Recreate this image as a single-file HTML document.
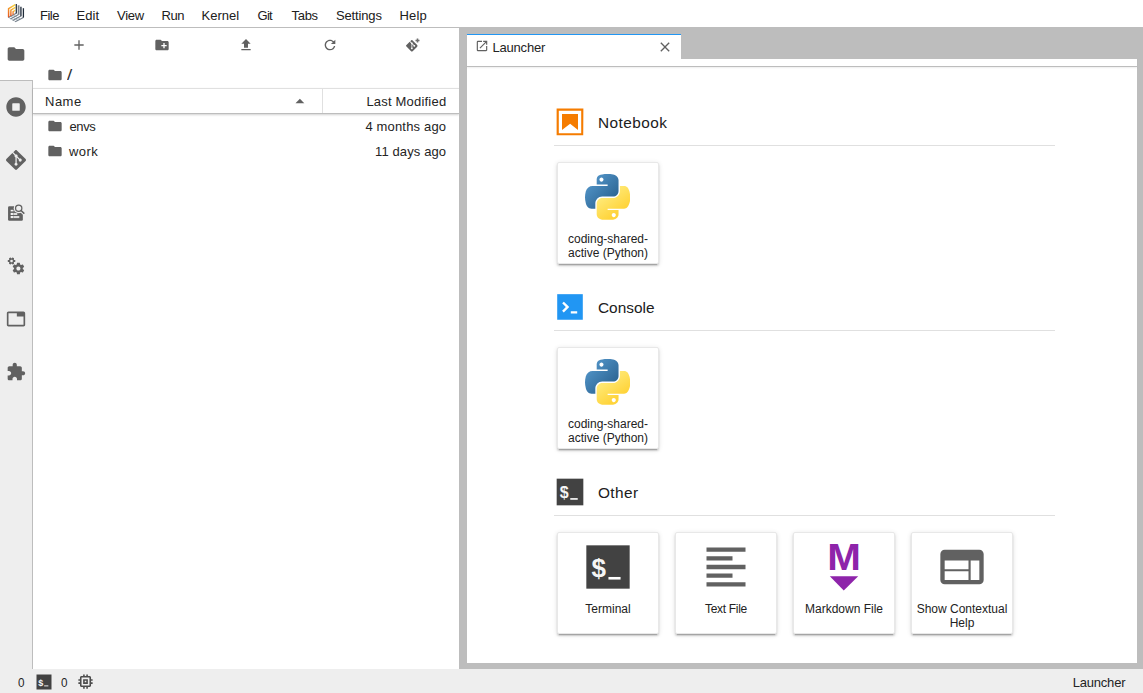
<!DOCTYPE html>
<html lang="en">
<head>
<meta charset="utf-8">
<title>JupyterLab</title>
<style>
html,body{margin:0;padding:0;}
body{width:1143px;height:693px;overflow:hidden;background:#fff;position:relative;
  font-family:"Liberation Sans",sans-serif;font-size:13px;color:#242424;}
.abs{position:absolute;}
.t{position:absolute;white-space:nowrap;line-height:1;}
svg{position:absolute;display:block;overflow:visible;}

/* top menu */
#menubar{left:0;top:0;width:1143px;height:27px;background:#fff;border-bottom:1px solid #bdbdbd;}
#menubar .t{top:9px;font-size:13px;color:#202020;}

/* left sidebar */
#sidebar{left:0;top:28px;width:32px;height:641px;background:#eee;border-right:1px solid #bdbdbd;}
#sbactive{left:0;top:28px;width:33px;height:52px;background:#fff;border-bottom:1px solid #bdbdbd;}

/* file browser */
#fb{left:33px;top:28px;width:426px;height:641px;background:#fff;}
#fbhead{left:33px;top:88px;width:426px;height:24px;border-top:1px solid #e0e0e0;border-bottom:1px solid #bdbdbd;box-shadow:0 1px 2px rgba(0,0,0,.18);background:#fff;}
#colsep{left:322px;top:89px;width:1px;height:24px;background:#e0e0e0;}

/* dock */
#dock{left:459px;top:28px;width:684px;height:641px;background:#bdbdbd;}
#tab{left:467px;top:34px;width:214px;height:24px;background:#fff;border-top:1px solid #2196f3;}
#toolbarstrip{left:467px;top:59px;width:670px;height:7px;background:#fff;border-bottom:1px solid #bdbdbd;box-shadow:0 1px 2px rgba(0,0,0,.07);z-index:2;}
#launcher{left:467px;top:67px;width:670px;height:596px;background:#fff;}

.sect{position:absolute;left:554px;width:501px;height:1px;background:#e0e0e0;}
.stitle{font-size:15.4px;color:#202020;}
.card{position:absolute;width:102px;height:102px;border-radius:2px;background:#fff;border:1px solid #e8e8e8;box-sizing:border-box;
  box-shadow:0 2px 2px 0 rgba(0,0,0,.14),0 1px 5px 0 rgba(0,0,0,.12),0 3px 1px -2px rgba(0,0,0,.2);}
.clab{position:absolute;left:0;width:100px;text-align:center;font-size:12px;line-height:14px;color:#222;}

/* status bar */
#status{left:0;top:669px;width:1143px;height:24px;background:#eee;}
#status .t{top:676px;font-size:13px;}
</style>
</head>
<body>


<!-- ===== SVG defs ===== -->
<svg width="0" height="0" style="left:0;top:0">
<defs>
<linearGradient id="pyb" x1="0" y1="0" x2="0.75" y2="0.75"><stop offset="0" stop-color="#5a9fd4"/><stop offset="1" stop-color="#306998"/></linearGradient>
<linearGradient id="pyy" x1="0.65" y1="0.75" x2="0.3" y2="0.25"><stop offset="0" stop-color="#ffd43b"/><stop offset="1" stop-color="#ffe873"/></linearGradient>
<linearGradient id="lgo" x1="0" y1="1" x2="0.6" y2="0"><stop offset="0" stop-color="#e8541e"/><stop offset="0.55" stop-color="#f39a2c"/><stop offset="1" stop-color="#f9cf3e"/></linearGradient>
<symbol id="python" viewBox="0 0 110.4 109.8" preserveAspectRatio="none">
<path fill="url(#pyb)" d="M54.918785 9.1927421e-4C50.335132.02221727 45.957846.41313697 42.106285 1.0946693 30.760069 3.0991731 28.700036 7.2947714 28.700035 15.032169v10.21875h26.8125v3.40625h-26.8125-10.0625c-7.792459 0-14.6157588 4.683717-16.7499998 13.59375-2.46181998 10.212966-2.57101508 16.586023 0 27.25 1.9059283 7.937852 6.4575432 13.593748 14.2499998 13.59375h9.21875v-12.25c0-8.849902 7.657144-16.656248 16.75-16.65625h26.78125c7.454951 0 13.406253-6.138164 13.40625-13.625v-25.53125c0-7.2663386-6.12998-12.7247771-13.40625-13.9374997C64.281548.32794397 59.502438-.02037903 54.918785 9.1927421e-4zM40.418785 8.2196693c2.769547 0 5.03125 2.2986456 5.03125 5.1249997-2e-6 2.816336-2.261703 5.09375-5.03125 5.09375-2.779476-1e-6-5.03125-2.277415-5.03125-5.09375-1e-6-2.8263541 2.251774-5.1249997 5.03125-5.1249997z"/>
<path fill="url(#pyy)" d="M85.637535 28.657169v11.90625c0 9.230755-7.825895 16.999999-16.75 17h-26.78125c-7.335833 0-13.406249 6.278483-13.40625 13.625v25.531247c0 7.266344 6.318588 11.540324 13.40625 13.625004 8.487331 2.49561 16.626237 2.94663 26.78125 0 6.750155-1.95439 13.406253-5.88761 13.40625-13.625004V86.500919h-26.78125v-3.40625h26.78125 13.406254c7.792461 0 10.696251-5.435408 13.406241-13.59375 2.79933-8.398886 2.68022-16.475776 0-27.25-1.92578-7.757441-5.60387-13.59375-13.406241-13.59375h-10.0625zM70.574989 93.313419c2.779475 0 5.03125 2.277417 5.03125 5.093747-2e-6 2.826354-2.251775 5.125004-5.03125 5.125004-2.769547 0-5.03125-2.29865-5.03125-5.125004 2e-6-2.81633 2.261703-5.093747 5.03125-5.093747z"/>
</symbol>
<symbol id="folder" viewBox="0 0 24 24"><path fill="#616161" d="M10 4H4c-1.100 0-1.990.900-1.990 2L2 18c0 1.100.900 2 2 2h16c1.100 0 2-.900 2-2V8c0-1.100-.900-2-2-2h-8l-2-2z"/></symbol>
<symbol id="gitlogo" viewBox="0 0 24 24"><path fill="#616161" d="M23.546 10.930L13.067.452c-.604-.603-1.582-.603-2.188 0L8.708 2.627l2.760 2.760c.645-.215 1.379-.070 1.889.441.516.515.658 1.258.438 1.900l2.658 2.660c.645-.223 1.387-.078 1.900.435.721.720.721 1.884 0 2.604-.719.719-1.881.719-2.600 0-.539-.541-.674-1.337-.404-1.996L12.860 8.955v6.525c.176.086.342.203.488.348.713.721.713 1.883 0 2.600-.719.721-1.889.721-2.609 0-.719-.719-.719-1.879 0-2.598.182-.180.387-.316.605-.406V8.835c-.217-.091-.424-.222-.600-.401-.545-.545-.676-1.342-.396-2.009L7.636 3.700.450 10.881c-.600.605-.600 1.584 0 2.189l10.480 10.477c.604.604 1.582.604 2.186 0l10.430-10.430c.605-.603.605-1.582 0-2.187"/></symbol>
<symbol id="gear" viewBox="0 0 24 24"><path fill="#616161" d="M14.900 17.450C16.250 17.450 17.350 16.350 17.350 15C17.350 13.650 16.250 12.550 14.900 12.550C13.540 12.550 12.450 13.650 12.450 15C12.450 16.350 13.540 17.450 14.900 17.450ZM20.100 15.680L21.580 16.840C21.710 16.950 21.750 17.130 21.660 17.290L20.260 19.710C20.170 19.860 20 19.920 19.830 19.860L18.090 19.160C17.730 19.440 17.330 19.670 16.910 19.850L16.640 21.700C16.620 21.870 16.470 22 16.300 22H13.500C13.320 22 13.180 21.870 13.150 21.700L12.890 19.850C12.460 19.670 12.070 19.440 11.710 19.160L9.960 19.860C9.810 19.920 9.620 19.860 9.540 19.710L8.140 17.290C8.050 17.130 8.090 16.950 8.220 16.840L9.700 15.680L9.650 15L9.700 14.310L8.220 13.160C8.090 13.050 8.050 12.860 8.140 12.710L9.540 10.290C9.620 10.130 9.810 10.070 9.960 10.130L11.710 10.840C12.070 10.560 12.460 10.320 12.890 10.150L13.150 8.289C13.180 8.129 13.320 8 13.500 8H16.300C16.470 8 16.620 8.129 16.640 8.289L16.910 10.150C17.330 10.320 17.730 10.560 18.090 10.840L19.830 10.130C20 10.070 20.170 10.130 20.260 10.290L21.660 12.710C21.750 12.860 21.710 13.050 21.580 13.160L20.100 14.310L20.150 15L20.100 15.680Z"/></symbol>
</defs>
</svg>

<!-- ===== menu bar ===== -->
<div id="menubar" class="abs">
  <span class="t" style="left:40px;letter-spacing:-.5px">File</span>
  <span class="t" style="left:76.500px;letter-spacing:.1px">Edit</span>
  <span class="t" style="left:117px;letter-spacing:-.3px">View</span>
  <span class="t" style="left:161.500px;letter-spacing:-.4px">Run</span>
  <span class="t" style="left:201.500px">Kernel</span>
  <span class="t" style="left:257.500px;letter-spacing:-.7px">Git</span>
  <span class="t" style="left:291.500px;letter-spacing:-.3px">Tabs</span>
  <span class="t" style="left:336px;letter-spacing:-.15px">Settings</span>
  <span class="t" style="left:399.500px;letter-spacing:.2px">Help</span>
</div>

<!-- ===== left sidebar ===== -->
<div id="sidebar" class="abs"></div>
<div id="sbactive" class="abs"></div>

<!-- ===== file browser ===== -->
<div id="fb" class="abs"></div>
<div id="fbhead" class="abs"></div>
<div id="colsep" class="abs"></div>
<span class="t" style="left:66.500px;top:68px;font-size:14.500px;color:#333;transform:scaleX(1.300);transform-origin:0 0">/</span>
<span class="t" style="left:45px;top:95px;font-size:13px;letter-spacing:.5px">Name</span>
<span class="t" style="right:696.700px;top:95px;font-size:13px;letter-spacing:.2px">Last Modified</span>
<span class="t" style="left:69.500px;top:120px;font-size:13px;letter-spacing:-.4px">envs</span>
<span class="t" style="left:69px;top:145px;font-size:13px;letter-spacing:.4px">work</span>
<span class="t" style="right:696.800px;top:120px;font-size:13px;letter-spacing:.17px">4 months ago</span>
<span class="t" style="right:696.800px;top:145px;font-size:13px;letter-spacing:.12px">11 days ago</span>


<!-- logo -->
<svg id="logo" width="26" height="26" viewBox="0 0 26 26" style="left:0;top:0">
  <g fill="none" stroke-linecap="butt" stroke-linejoin="miter">
    <path d="M13.100 14.900L20.200 19.100M10.900 16.100L18 20.300M8.600 17.400L15.700 21.600" stroke="#aab2bb" stroke-width="0.800"/>
    <path d="M16.300 13.200L8.200 17.600M18.600 14.600L10.400 19M20.900 16L12.700 20.400M23.400 17.400L15.200 21.800" stroke="#75808c" stroke-width="1.150"/>
    <path d="M8.600 17.300V8.700L15.300 4.700" stroke="url(#lgo)" stroke-width="1.500"/>
    <path d="M10.900 16V10.100L15.300 7.400" stroke="url(#lgo)" stroke-width="1.400"/>
    <path d="M13.100 14.700V11.600L15.300 10.200" stroke="url(#lgo)" stroke-width="1.300"/>
    <path d="M16.300 3.900V13.400" stroke="#1f2a38" stroke-width="1.200"/>
    <path d="M18.600 5.300V14.800" stroke="#7b828c" stroke-width="1.800"/>
    <path d="M20.900 6.700V16.200" stroke="#59616d" stroke-width="1.800"/>
    <path d="M23.400 8.200V17.600" stroke="#1f2a38" stroke-width="1.300"/>
  </g>
</svg>

<!-- sidebar icons -->
<svg width="20" height="20" style="left:6px;top:44px"><use href="#folder"/></svg>
<svg width="20" height="20" viewBox="0 0 512 512" style="left:6px;top:97px"><path fill="#616161" d="M256 8C119 8 8 119 8 256s111 248 248 248 248-111 248-248S393 8 256 8zm96 328c0 8.800-7.200 16-16 16H176c-8.800 0-16-7.200-16-16V176c0-8.800 7.200-16 16-16h160c8.800 0 16 7.200 16 16v160z"/></svg>
<svg width="20" height="20" style="left:6px;top:150px"><use href="#gitlogo"/></svg>
<svg width="20" height="20" viewBox="0 0 20 20" style="left:6px;top:203px">
  <rect x="2.050" y="3.200" width="14.800" height="14.500" rx="1.200" fill="#616161"/>
  <circle cx="12.700" cy="5.250" r="5" fill="#eee"/>
  <path d="M14.600 7.200L19 11.300" stroke="#eee" stroke-width="3.600" fill="none"/>
  <rect x="4.650" y="6.800" width="2.300" height="1.600" fill="#f4f4f4"/><rect x="7.300" y="6.800" width="1.300" height="1.600" fill="#cfcfcf"/>
  <rect x="4.650" y="9.900" width="2.300" height="2.100" fill="#f4f4f4"/><rect x="7.300" y="9.900" width="4" height="2.100" fill="#dcdcdc"/>
  <rect x="4.650" y="13" width="2.300" height="2.100" fill="#f4f4f4"/><rect x="7.300" y="13" width="6" height="2.100" fill="#dcdcdc"/>
  <circle cx="12.700" cy="5.250" r="3.150" fill="none" stroke="#616161" stroke-width="1.250"/>
  <path d="M15 7.500L17.800 10.100" stroke="#616161" stroke-width="1.600" stroke-linecap="round" fill="none"/>
</svg>
<svg width="20" height="20" viewBox="0 0 24 24" style="left:6px;top:256px">
  <use href="#gear" width="24" height="24"/>
  <g transform="translate(6.640 6) rotate(30) scale(0.643) translate(-14.900 -15)"><use href="#gear" width="24" height="24"/></g>
</svg>
<svg width="20" height="20" viewBox="0 0 24 24" style="left:6px;top:309px"><path fill="#616161" d="M21 3H3c-1.100 0-2 .900-2 2v14c0 1.100.900 2 2 2h18c1.100 0 2-.900 2-2V5c0-1.100-.900-2-2-2zm0 16H3V5h10v4h8v10z"/></svg>
<svg width="20" height="20" viewBox="0 0 24 24" style="left:6px;top:362px"><path fill="#616161" d="M20.500 11H19V7c0-1.100-.900-2-2-2h-4V3.500C13 2.120 11.880 1 10.500 1S8 2.120 8 3.500V5H4c-1.100 0-1.990.900-1.990 2v3.800H3.500c1.490 0 2.700 1.210 2.700 2.700s-1.210 2.700-2.700 2.700H2V20c0 1.100.900 2 2 2h3.800v-1.500c0-1.490 1.210-2.700 2.700-2.700 1.490 0 2.700 1.210 2.700 2.700V22H17c1.100 0 2-.900 2-2v-4h1.500c1.380 0 2.500-1.120 2.500-2.500S21.880 11 20.500 11z"/></svg>

<!-- file browser toolbar -->
<svg width="16" height="16" viewBox="0 0 24 24" style="left:71px;top:37px"><path fill="#616161" d="M19 13h-6v6h-2v-6H5v-2h6V5h2v6h6v2z"/></svg>
<svg width="16" height="16" viewBox="0 0 24 24" style="left:154px;top:37px"><path fill="#616161" d="M20 6h-8l-2-2H4c-1.110 0-1.990.890-1.990 2L2 18c0 1.110.890 2 2 2h16c1.110 0 2-.890 2-2V8c0-1.110-.890-2-2-2zm-1 8h-3v3h-2v-3h-3v-2h3V9h2v3h3v2z"/></svg>
<svg width="16" height="16" viewBox="0 0 24 24" style="left:238px;top:37px"><path fill="#616161" d="M9 16h6v-6h4l-7-7-7 7h4zm-4 2h14v2H5z"/></svg>
<svg width="16" height="16" viewBox="0 0 18 18" style="left:322px;top:37px"><path fill="#616161" d="M9 13.500c-2.490 0-4.500-2.010-4.500-4.500S6.510 4.500 9 4.500c1.240 0 2.360.520 3.170 1.330L10 8h5V3l-1.760 1.760C12.150 3.680 10.660 3 9 3 5.690 3 3.010 5.690 3.010 9S5.690 15 9 15c2.970 0 5.430-2.160 5.900-5h-1.520c-.460 2-2.240 3.500-4.380 3.500z"/></svg>
<svg width="11.700" height="11.700" style="left:405.800px;top:40.200px"><use href="#gitlogo"/></svg>
<svg width="5" height="5" viewBox="0 0 5 5" style="left:414.500px;top:38.300px"><path d="M2.500 0.500V4.500M0.500 2.500H4.500" stroke="#707070" stroke-width="1.600" fill="none"/></svg>

<!-- breadcrumb + listing folder icons -->
<svg width="16" height="16" style="left:47px;top:67px"><use href="#folder"/></svg>
<svg width="16" height="16" style="left:47px;top:118px"><use href="#folder"/></svg>
<svg width="16" height="16" style="left:47px;top:143px"><use href="#folder"/></svg>
<!-- sort caret -->
<svg width="10" height="6" viewBox="0 0 10 6" style="left:295px;top:98px"><path fill="#616161" d="M0.500 5.200L4.900 0.700L9.300 5.200z"/></svg>

<!-- ===== dock panel ===== -->
<div id="dock" class="abs"></div>
<div id="tab" class="abs"></div>
<div id="toolbarstrip" class="abs"></div>
<div id="launcher" class="abs"></div>
<span class="t" style="left:492.500px;top:41px;font-size:13px;letter-spacing:-.2px">Launcher</span>

<!-- sections -->
<span class="t stitle" style="left:598px;top:115px;letter-spacing:.45px">Notebook</span>
<div class="sect" style="top:145px"></div>
<span class="t stitle" style="left:598px;top:300px">Console</span>
<div class="sect" style="top:330px"></div>
<span class="t stitle" style="left:598px;top:485px;letter-spacing:.4px">Other</span>
<div class="sect" style="top:515px"></div>

<!-- cards -->
<div class="card" style="left:557px;top:162px"><div class="clab" style="top:69px">coding-shared-<br>active (Python)</div></div>
<div class="card" style="left:557px;top:347px"><div class="clab" style="top:69px">coding-shared-<br>active (Python)</div></div>
<div class="card" style="left:557px;top:532px"><div class="clab" style="top:69px">Terminal</div></div>
<div class="card" style="left:675px;top:532px"><div class="clab" style="top:69px;letter-spacing:-.3px">Text File</div></div>
<div class="card" style="left:793px;top:532px"><div class="clab" style="top:69px">Markdown File</div></div>
<div class="card" style="left:911px;top:532px"><div class="clab" style="top:69px">Show Contextual<br>Help</div></div>


<!-- tab icons -->
<svg width="14" height="14" viewBox="0 0 24 24" style="left:475px;top:39px"><path fill="#616161" d="M19 19H5V5h7V3H5a2 2 0 00-2 2v14a2 2 0 002 2h14c1.100 0 2-.900 2-2v-7h-2v7zM14 3v2h3.590l-9.830 9.830 1.410 1.410L19 6.410V10h2V3h-7z"/></svg>
<svg width="16" height="16" viewBox="0 0 24 24" style="left:657px;top:39px"><path fill="#616161" d="M19 6.410L17.590 5 12 10.590 6.410 5 5 6.410 10.590 12 5 17.590 6.410 19 12 13.410 17.590 19 19 17.590 13.410 12z"/></svg>

<!-- section icons -->
<svg width="32" height="32" viewBox="0 0 22 22" style="left:554px;top:106px"><g fill="#f57c00"><path d="M18.700 3.300v15.400H3.300V3.300h15.400m1.500-1.500H1.800v18.300h18.300l.1-18.300z"/><path d="M16.500 16.500l-5.400-4.300-5.600 4.300v-11h11z"/></g></svg>
<svg width="32" height="32" viewBox="0 0 200 200" style="left:554px;top:291px"><path fill="#2196f3" d="M20 19.800h160v159.900H20z"/><path fill="#fff" d="M105 127.300h40v12.800h-40zM51.100 77L74 99.900l-23.300 23.300 10.500 10.500 23.300-23.300L95 99.900 84.500 89.400 61.600 66.500z"/></svg>
<svg width="32" height="32" viewBox="0 0 24 24" style="left:554px;top:476px"><rect x="2" y="2" width="20" height="20" fill="#424242"/><text x="4.400" y="16.700" font-family="Liberation Sans, sans-serif" font-weight="bold" font-size="12" fill="#f5f5f5">$</text><rect x="12.200" y="16.600" width="5.600" height="1.200" fill="#fff"/></svg>

<!-- card icons -->
<svg width="45" height="45.800" style="left:585px;top:174px"><use href="#python"/></svg>
<svg width="45" height="45.800" style="left:585px;top:359px"><use href="#python"/></svg>
<svg width="52" height="52" viewBox="0 0 24 24" style="left:582px;top:541px"><rect x="2" y="2" width="20" height="20" fill="#424242"/><text x="4.400" y="16.700" font-family="Liberation Sans, sans-serif" font-weight="bold" font-size="12" fill="#f5f5f5">$</text><rect x="12.200" y="16.600" width="5.600" height="1.200" fill="#fff"/></svg>
<svg width="52" height="52" viewBox="0 0 24 24" style="left:700px;top:541px"><path fill="#616161" d="M15 15H3v2h12v-2zm0-8H3v2h12V7zM3 13h18v-2H3v2zm0 8h18v-2H3v2zM3 3v2h18V3H3z"/></svg>
<svg width="52" height="52" viewBox="0 0 22 22" style="left:818px;top:541px"><text transform="translate(11 12.400) scale(1.110 1)" x="0" y="0" text-anchor="middle" font-family="Liberation Sans, sans-serif" font-weight="bold" font-size="15.400" fill="#8e24aa">M</text><path fill="#8e24aa" d="M5 14.900h12l-6.100 6z"/></svg>
<svg width="52" height="52" viewBox="0 0 24 24" style="left:936px;top:541px"><path fill="#616161" d="M20 4H4c-1.100 0-1.990.900-1.990 2L2 18c0 1.100.900 2 2 2h16c1.100 0 2-.900 2-2V6c0-1.100-.900-2-2-2zm-5 14H4v-4h11v4zm0-5H4V9h11v4zm5 5h-4V9h4v9z"/></svg>

<!-- ===== status bar ===== -->
<div id="status" class="abs"></div>
<span class="t" style="left:18px;top:676px;font-size:13px;transform:scaleX(.900);transform-origin:0 0">0</span>
<span class="t" style="left:61px;top:676px;font-size:13px;transform:scaleX(.900);transform-origin:0 0">0</span>
<span class="t" style="left:1072.700px;top:676px;font-size:13px;letter-spacing:-.2px">Launcher</span>


<svg width="18" height="18" viewBox="0 0 24 24" style="left:35px;top:673px"><rect x="2" y="2" width="20" height="20" fill="#424242"/><text x="4.400" y="16.700" font-family="Liberation Sans, sans-serif" font-weight="bold" font-size="12" fill="#f5f5f5">$</text><rect x="12.200" y="16.600" width="5.600" height="1.200" fill="#fff"/></svg>
<svg width="19" height="19" viewBox="0 0 24 24" style="left:76.200px;top:671.500px"><path fill="#4c4c4c" d="M15 9H9v6h6V9zm-2 4h-2v-2h2v2zm8-2V9h-2V7c0-1.100-.900-2-2-2h-2V3h-2v2h-2V3H9v2H7c-1.100 0-2 .900-2 2v2H3v2h2v2H3v2h2v2c0 1.100.900 2 2 2h2v2h2v-2h2v2h2v-2h2c1.100 0 2-.900 2-2v-2h2v-2h-2v-2h2zm-4 6H7V7h10v10z"/></svg>

</body>
</html>
